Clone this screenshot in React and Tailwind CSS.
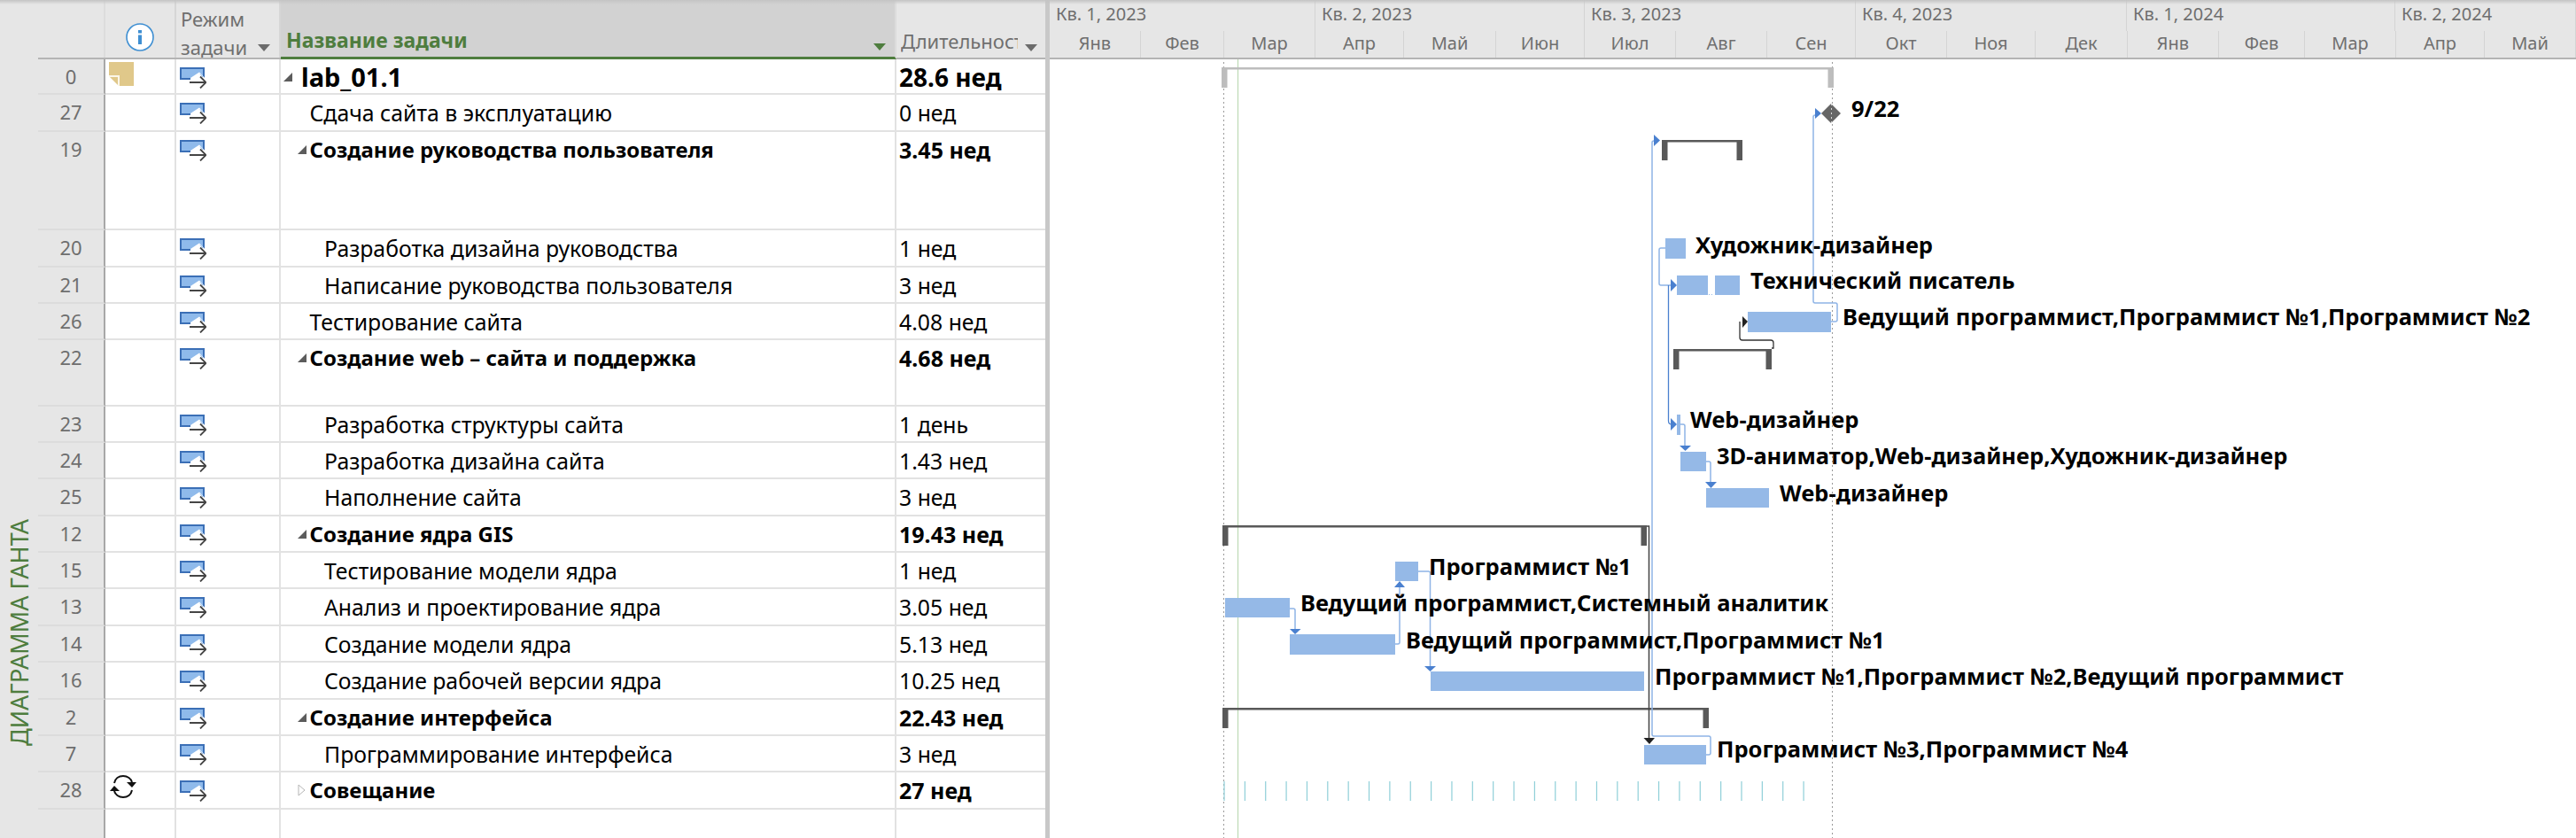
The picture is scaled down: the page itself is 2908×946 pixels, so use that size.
import React from 'react'

const ROWS = [
  { id: 0, name: 'lab_01.1', dur: '28.6 нед', level: 0, kind: 'root', h: 'h-[40.3px]', note: true },
  { id: 27, name: 'Сдача сайта в эксплуатацию', dur: '0 нед', level: 1, h: 'h-[41.7px]' },
  { id: 19, name: 'Создание руководства пользователя', dur: '3.45 нед', level: 1, kind: 'sum', h: 'h-[111.3px]' },
  { id: 20, name: 'Разработка дизайна руководства', dur: '1 нед', level: 2, h: 'h-[41.4px]' },
  { id: 21, name: 'Написание руководства пользователя', dur: '3 нед', level: 2, h: 'h-[41.3px]' },
  { id: 26, name: 'Тестирование сайта', dur: '4.08 нед', level: 1, h: 'h-[41.3px]' },
  { id: 22, name: 'Создание web – сайта и поддержка', dur: '4.68 нед', level: 1, kind: 'sum', h: 'h-[74.5px]' },
  { id: 23, name: 'Разработка структуры сайта', dur: '1 день', level: 2, h: 'h-[41.2px]' },
  { id: 24, name: 'Разработка дизайна сайта', dur: '1.43 нед', level: 2, h: 'h-[41.3px]' },
  { id: 25, name: 'Наполнение сайта', dur: '3 нед', level: 2, h: 'h-[41.4px]' },
  { id: 12, name: 'Создание ядра GIS', dur: '19.43 нед', level: 1, kind: 'sum', h: 'h-[41.3px]' },
  { id: 15, name: 'Тестирование модели ядра', dur: '1 нед', level: 2, h: 'h-[41.5px]' },
  { id: 13, name: 'Анализ и проектирование ядра', dur: '3.05 нед', level: 2, h: 'h-[41.5px]' },
  { id: 14, name: 'Создание модели ядра', dur: '5.13 нед', level: 2, h: 'h-[41.3px]' },
  { id: 16, name: 'Создание рабочей версии ядра', dur: '10.25 нед', level: 2, h: 'h-[41.4px]' },
  { id: 2, name: 'Создание интерфейса', dur: '22.43 нед', level: 1, kind: 'sum', h: 'h-[41.3px]' },
  { id: 7, name: 'Программирование интерфейса', dur: '3 нед', level: 2, h: 'h-[41.3px]' },
  { id: 28, name: 'Совещание', dur: '27 нед', level: 1, kind: 'rec', h: 'h-[41.3px]', recurring: true },
]

const QUARTERS = [
  { label: 'Кв. 1, 2023', w: 'w-[300px]' },
  { label: 'Кв. 2, 2023', w: 'w-[304px]' },
  { label: 'Кв. 3, 2023', w: 'w-[306px]' },
  { label: 'Кв. 4, 2023', w: 'w-[306px]' },
  { label: 'Кв. 1, 2024', w: 'w-[303px]' },
  { label: 'Кв. 2, 2024', w: 'flex-1' },
]

const MONTHS = [
  ['Янв', 'w-[103px]'], ['Фев', 'w-[94px]'], ['Мар', 'w-[103px]'], ['Апр', 'w-[100px]'],
  ['Май', 'w-[104px]'], ['Июн', 'w-[100px]'], ['Июл', 'w-[103px]'], ['Авг', 'w-[103px]'],
  ['Сен', 'w-[100px]'], ['Окт', 'w-[103px]'], ['Ноя', 'w-[100px]'], ['Дек', 'w-[104px]'],
  ['Янв', 'w-[103px]'], ['Фев', 'w-[97px]'], ['Мар', 'w-[103px]'], ['Апр', 'w-[100px]'],
  ['Май', 'flex-1'],
]

// page coordinates: x1, x2, y1, y2
const BARS = [
  [1880, 1903, 269, 292], [1893, 1928, 311, 333], [1936, 1964, 311, 333], [1973, 2067, 352, 375],
  [1893, 1897, 468, 491], [1897, 1926, 510, 532], [1926, 1997, 551, 573],
  [1575, 1601, 634, 656], [1383, 1456, 675, 697], [1456, 1575, 716, 739], [1615, 1856, 758, 780],
  [1856, 1926, 841, 863],
]

const SUMMARIES = [
  { x1: 1379, x2: 2070, y: 76, color: '#bdbdbd' },
  { x1: 1876, x2: 1967, y: 158, color: '#595959' },
  { x1: 1889, x2: 2000, y: 394, color: '#595959' },
  { x1: 1380, x2: 1859, y: 593, color: '#595959' },
  { x1: 1380, x2: 1929, y: 799, color: '#595959' },
]

const LABELS = [
  ['9/22', 2090, 122],
  ['Художник-дизайнер', 1914, 276],
  ['Технический писатель', 1976, 316],
  ['Ведущий программист,Программист №1,Программист №2', 2080, 357],
  ['Web-дизайнер', 1908, 473],
  ['3D-аниматор,Web-дизайнер,Художник-дизайнер', 1938, 514],
  ['Web-дизайнер', 2009, 556],
  ['Программист №1', 1613, 639],
  ['Ведущий программист,Системный аналитик', 1468, 680],
  ['Ведущий программист,Программист №1', 1587, 722],
  ['Программист №1,Программист №2,Ведущий программист', 1868, 763],
  ['Программист №3,Программист №4', 1938, 845],
]

const TICKS = Array.from({ length: 29 }, (_, i) => 1382 + i * 23.36)

function Caret({ color = '#6b6b6b' }) {
  return (
    <svg width="14" height="8" viewBox="0 0 14 8" className="shrink-0">
      <path d="M0 0H14L7 8Z" fill={color} />
    </svg>
  )
}

function ModeIcon() {
  return (
    <svg width="30" height="24" viewBox="0 0 30 24" className="shrink-0">
      <rect x="1" y="1" width="26" height="12" fill="#8fbaeb" stroke="#3b6fb6" strokeWidth="2" />
      <path d="M12 15V12L22 5.5L30 14V15Z" fill="#fff" />
      <path d="M23 7.5 L26 11" stroke="#8fbaeb" strokeWidth="1" />
      <path d="M11 17H29M23 10.5L29.5 17L23 23.5" fill="none" stroke="#454545" strokeWidth="1.8" />
    </svg>
  )
}

function NoteIcon() {
  return (
    <svg width="28" height="27" viewBox="0 0 28 27">
      <path d="M0 0H28V27H11L0 16Z" fill="#e0c88a" />
      <path d="M0 16H11V27" fill="none" stroke="#fbf6e8" strokeWidth="2" />
    </svg>
  )
}

function RecurIcon() {
  return (
    <svg width="32" height="26" viewBox="0 0 32 26">
      <path d="M6 9C7 4 11 1 16 1C21 1 25 4 26 8" fill="none" stroke="#111" strokeWidth="2" />
      <path d="M26 17C25 22 21 25 16 25C11 25 7 22 6 18" fill="none" stroke="#111" strokeWidth="2" />
      <path d="M20 8H31L26 14Z" fill="#111" />
      <path d="M1 18H12L6 12Z" fill="#111" />
    </svg>
  )
}

function InfoIcon() {
  return (
    <svg width="32" height="32" viewBox="0 0 32 32">
      <circle cx="16" cy="16" r="15" fill="#fff" stroke="#3f8fd2" strokeWidth="1.6" />
      <rect x="14" y="13.5" width="4" height="10.5" fill="#3f8fd2" />
      <rect x="14" y="8" width="4" height="3.5" fill="#3f8fd2" />
    </svg>
  )
}

function Toggle({ open = true }) {
  return open ? (
    <svg width="10" height="10" viewBox="0 0 10 10" className="shrink-0">
      <path d="M10 0V10H0Z" fill="#5c5c5c" />
    </svg>
  ) : (
    <svg width="9" height="14" viewBox="0 0 9 14" className="shrink-0">
      <path d="M1 1L8 7L1 13Z" fill="#fff" stroke="#b5b5b5" />
    </svg>
  )
}

function Row({ row }) {
  const bold = row.kind === 'root' || row.kind === 'sum' || row.kind === 'rec'
  const indent = row.level === 0 ? 'pl-[3px]' : row.level === 1 ? 'pl-[32.5px]' : 'pl-[49px]'
  const nameSize = row.kind === 'root' ? 'text-[29px]' : bold ? 'text-[24px]' : 'text-[24.8px]'
  const durSize = row.kind === 'root' ? 'text-[28px]' : bold ? 'text-[25px]' : 'text-[24.8px]'
  return (
    <div className={`flex ${row.h} shrink-0`}>
      <div className="flex w-[76px] shrink-0 justify-center border-r-2 border-b-2 border-r-[#a8a8a8] border-b-[#dcdcdc] bg-[#e6e6e6] text-[22px] leading-[39px] text-[#6e6e6e]">
        {row.id}
      </div>
      <div className="flex w-[80px] shrink-0 justify-start border-r-2 border-b-2 border-[#e2e2e2] pt-[3px] pl-[4px]">
        {row.note && <NoteIcon />}
        {row.recurring && <RecurIcon />}
      </div>
      <div className="flex w-[118px] shrink-0 border-r-2 border-b-2 border-[#e2e2e2] pt-[9px] pl-[4px]">
        <ModeIcon />
      </div>
      <div className={`relative w-[695px] shrink-0 overflow-hidden border-r-2 border-b-2 border-[#e2e2e2] whitespace-nowrap text-black ${indent} ${nameSize} ${bold ? 'font-bold' : ''} leading-[40px]`}>
        {row.kind === 'root' && <span className="absolute top-[15px] left-[3px]"><Toggle /></span>}
        {row.kind === 'sum' && <span className="absolute top-[15px] left-[19px]"><Toggle /></span>}
        {row.kind === 'rec' && <span className="absolute top-[13px] left-[19px]"><Toggle open={false} /></span>}
        <span className={row.kind === 'root' ? 'ml-[20px]' : ''}>{row.name}</span>
      </div>
      <div className={`flex-1 overflow-hidden border-b-2 border-[#e2e2e2] pl-[3px] whitespace-nowrap text-black ${durSize} ${bold ? 'font-bold' : ''} leading-[40px]`}>
        {row.dur}
      </div>
    </div>
  )
}

function TableHeader() {
  return (
    <div className="flex h-[67px] shrink-0 border-b-2 border-[#b4b4b4] text-[22px] text-[#6f6f6f]">
      <div className="w-[76px] shrink-0 border-r-2 border-[#dcdcdc] bg-[#e6e6e6]" />
      <div className="flex w-[80px] shrink-0 items-center justify-center border-r-2 border-[#d6d6d6] bg-[#e6e6e6] pt-[19px]">
        <InfoIcon />
      </div>
      <div className="relative w-[118px] shrink-0 border-r-2 border-[#d6d6d6] bg-[#e6e6e6] pl-[5px] pt-[5px] leading-[32px]">
        <div>Режим</div>
        <div>задачи</div>
        <span className="absolute right-[10px] bottom-[7px] flex"><Caret /></span>
      </div>
      <div className="relative -mb-[2px] flex w-[695px] shrink-0 items-end border-b-[3px] border-r-2 border-b-[#4e7d3e] border-r-[#dcdcdc] bg-[#d2d2d2] pb-[3px] pl-[6px] text-[23px] leading-[32px] font-bold text-[#4e7d3e]">
        Название задачи
        <span className="absolute right-[10px] bottom-[7px] flex"><Caret color="#4e7d3e" /></span>
      </div>
      <div className="relative flex flex-1 items-end bg-[#e6e6e6] pb-[3px] pl-[5px] leading-[32px]">
        <span className="w-[132px] overflow-hidden whitespace-nowrap">Длительность</span>
        <span className="absolute right-[9px] bottom-[7px] flex"><Caret /></span>
      </div>
    </div>
  )
}

function TimelineHeader() {
  return (
    <div className="flex h-[67px] shrink-0 flex-col border-b-2 border-[#b4b4b4] bg-[#e6e6e6] text-[20px] text-[#6f6f6f]">
      <div className="flex h-[35px] shrink-0">
        {QUARTERS.map(q => (
          <div key={q.label} className={`${q.w} shrink-0 border-r border-[#d4d4d4] pl-[7px] leading-[32px]`}>
            {q.label}
          </div>
        ))}
      </div>
      <div className="flex flex-1">
        {MONTHS.map(([m, w], i) => (
          <div key={i} className={`${w} shrink-0 border-r border-[#d4d4d4] text-center leading-[28px]`}>
            {m}
          </div>
        ))}
      </div>
    </div>
  )
}

function Chart() {
  const blue = '#4a80cf'
  const soft = '#8fb4e6'
  return (
    <svg className="absolute inset-0" width="1723" height="879" viewBox="1185 67 1723 879">
      {/* date lines */}
      <path d="M1381.5 70V946M2068.5 70V946" stroke="#9a9a9a" strokeWidth="1" strokeDasharray="2 3" />
      <path d="M1397.5 67V946" stroke="#b5d6ad" strokeWidth="1" />

      {/* recurring meeting ticks */}
      {TICKS.map(x => (
        <path key={x} d={`M${x} 882V904`} stroke="#8fcfd8" strokeWidth="1.2" />
      ))}

      {BARS.map(([x1, x2, y1, y2]) => (
        <rect key={`${x1}-${y1}`} x={x1} y={y1} width={x2 - x1} height={y2 - y1} fill="#95b9e7" />
      ))}
      <path d="M1929 332.5H1935" stroke="#95b9e7" strokeWidth="1" strokeDasharray="1 2" />

      {SUMMARIES.map(s => (
        <path
          key={s.y}
          d={`M${s.x1} ${s.y}H${s.x2}V${s.y + 23}H${s.x2 - 6.5}V${s.y + 2.5}H${s.x1 + 6.5}V${s.y + 23}H${s.x1}Z`}
          fill={s.color}
        />
      ))}

      {/* milestone */}
      <path d="M2067 117L2078 128L2067 139L2056 128Z" fill="#666" />
      <path d="M2067.5 117V139" stroke="#d8d8d8" strokeWidth="1" strokeDasharray="2 3" />

      {/* dark links */}
      <path d="M1859 594H1861.5V833" fill="none" stroke="#444" strokeWidth="1.5" />
      <path d="M1855.5 833H1868L1862 840Z" fill="#222" />
      <path d="M2000 393H2002V387Q2002 384 1999 384H1967Q1964 384 1964 381V363" fill="none" stroke="#333" strokeWidth="1.3" />
      <path d="M1967 357L1973 363L1967 370Z" fill="#222" />

      {/* blue links */}
      <g fill="none" stroke={soft} strokeWidth="1.5">
        <path d="M2067 363H2072Q2074 363 2074 361V344Q2074 342 2072 342H2049Q2047 342 2047 340V132Q2047 130 2049 130" />
        <path d="M1926 852H1929Q1931 852 1931 850V833Q1931 831 1929 831H1867Q1865 831 1865 829V161Q1865 159 1867 159" />
        <path d="M1880 280H1875Q1873 280 1873 282V320Q1873 322 1875 322H1886" />
        <path d="M1456 687H1460Q1462 687 1462 689V710" />
        <path d="M1575 727H1578Q1580 727 1580 725V663" />
        <path d="M1601 645H1612.5Q1614.5 645 1614.5 647V752" />
        <path d="M1897 479H1900Q1902 479 1902 481V503" />
        <path d="M1926 521H1929Q1931 521 1931 523V544" />
      </g>
      <path d="M1883.5 322V475Q1883.5 479 1887 479" fill="none" stroke={blue} strokeWidth="1.3" />
      <g fill={blue}>
        <path d="M2049 122L2056 128L2049 134Z" />
        <path d="M1867 152L1874 158.5L1867 165Z" />
        <path d="M1886 315L1893 322L1886 329Z" />
        <path d="M1886 472L1893 479L1886 486Z" />
        <path d="M1456 710H1468.5L1462 716Z" />
        <path d="M1574 663H1586L1580 656Z" />
        <path d="M1608 752H1621L1614.5 758Z" />
        <path d="M1896 503H1909L1902.5 509Z" />
        <path d="M1925 544H1938L1931.5 551Z" />
      </g>
    </svg>
  )
}

export default function App() {
  return (
    <div className="flex h-[946px] w-[2908px] overflow-hidden bg-white font-['Noto_Sans',sans-serif]">
      <div className="flex w-[43px] shrink-0 flex-col items-center justify-end bg-[#e6e6e6] pb-[104px]">
        <span className="rotate-180 text-[27px] leading-[30px] whitespace-nowrap text-[#4e7d3e] [writing-mode:vertical-rl]">
          ДИАГРАММА ГАНТА
        </span>
      </div>

      <div className="flex w-[1137px] shrink-0 flex-col">
        <TableHeader />
        {ROWS.map(r => <Row key={r.id} row={r} />)}
        <div className="flex flex-1">
          <div className="w-[76px] shrink-0 border-r-2 border-[#a8a8a8] bg-[#e6e6e6]" />
          <div className="w-[80px] shrink-0 border-r-2 border-[#e2e2e2]" />
          <div className="w-[118px] shrink-0 border-r-2 border-[#e2e2e2]" />
          <div className="w-[695px] shrink-0 border-r-2 border-[#e2e2e2]" />
        </div>
      </div>

      <div className="w-[5px] shrink-0 bg-[#c8c8c8]" />

      <div className="flex min-w-0 flex-1 flex-col">
        <TimelineHeader />
        <div className="relative flex-1">
          <Chart />
          {LABELS.map(([text, x, y]) => (
            <div
              key={`${text}-${y}`}
              className="absolute text-[25.5px] leading-[32px] font-bold whitespace-nowrap text-black"
              style={{ left: x - 1185, top: y - 67 - 16 }}
            >
              {text}
            </div>
          ))}
        </div>
      </div>

      {/* soft shadow along the top edge of the window */}
      <div className="pointer-events-none absolute top-0 left-0 h-[5px] w-[2908px] bg-gradient-to-b from-[#c4c4c4] to-transparent" />
    </div>
  )
}
